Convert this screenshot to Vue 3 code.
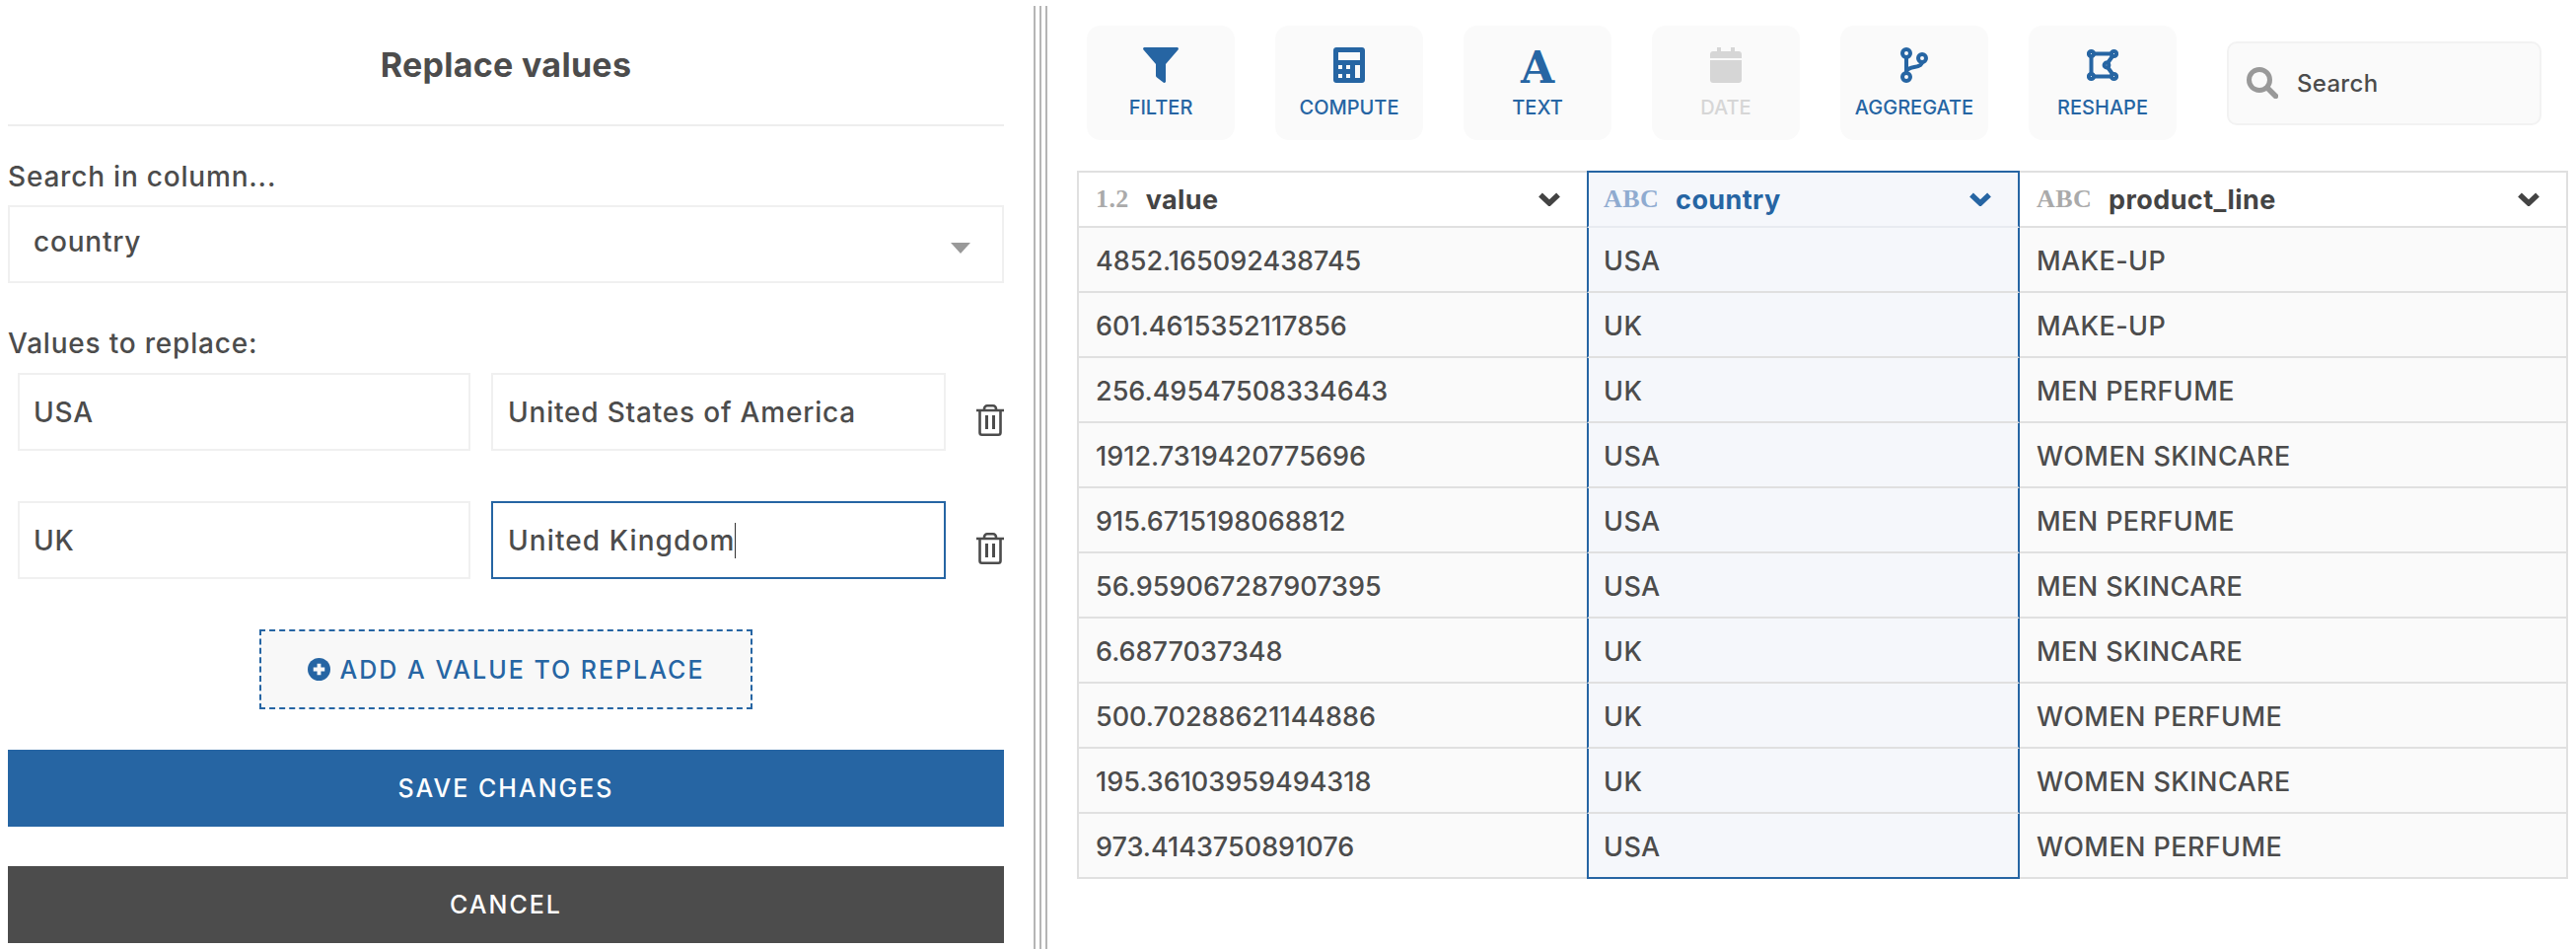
<script setup>
const rows = [
  ['4852.165092438745', 'USA', 'MAKE-UP'],
  ['601.4615352117856', 'UK', 'MAKE-UP'],
  ['256.49547508334643', 'UK', 'MEN PERFUME'],
  ['1912.7319420775696', 'USA', 'WOMEN SKINCARE'],
  ['915.6715198068812', 'USA', 'MEN PERFUME'],
  ['56.959067287907395', 'USA', 'MEN SKINCARE'],
  ['6.6877037348', 'UK', 'MEN SKINCARE'],
  ['500.70288621144886', 'UK', 'WOMEN PERFUME'],
  ['195.36103959494318', 'UK', 'WOMEN SKINCARE'],
  ['973.4143750891076', 'USA', 'WOMEN PERFUME'],
]

const columns = [
  { type: '1.2', name: 'value' },
  { type: 'ABC', name: 'country', active: true },
  { type: 'ABC', name: 'product_line' },
]
</script>

<template>
  <div class="page">
    <section class="panel">
      <h1 class="title">Replace values</h1>

      <label class="label label-search">Search in column...</label>
      <div class="select">
        <span>country</span>
        <i class="arrow"></i>
      </div>

      <label class="label label-values">Values to replace:</label>
      <div class="pair">
        <div class="field">USA</div>
        <div class="field">United States of America</div>
        <svg class="trash" viewBox="0 0 28 32" fill="none" stroke="#4c4c4c" stroke-width="2.6">
          <path d="M0 6h28M8 6V4.5C8 2.5 9.5 1.3 11 1.3h6c1.5 0 3 1.2 3 3.2V6" />
          <path d="M3.5 6v22.5c0 1.3 .9 2.2 2.2 2.2h16.6c1.3 0 2.2-.9 2.2-2.2V6" />
          <path d="M10.5 11v14M17.5 11v14" stroke-width="3" />
        </svg>
      </div>
      <div class="pair second">
        <div class="field">UK</div>
        <div class="field focused">United Kingdom<i class="caret"></i></div>
        <svg class="trash" viewBox="0 0 28 32" fill="none" stroke="#4c4c4c" stroke-width="2.6">
          <path d="M0 6h28M8 6V4.5C8 2.5 9.5 1.3 11 1.3h6c1.5 0 3 1.2 3 3.2V6" />
          <path d="M3.5 6v22.5c0 1.3 .9 2.2 2.2 2.2h16.6c1.3 0 2.2-.9 2.2-2.2V6" />
          <path d="M10.5 11v14M17.5 11v14" stroke-width="3" />
        </svg>
      </div>

      <button class="add">
        <svg viewBox="0 0 24 24" width="23" height="23">
          <circle cx="12" cy="12" r="12" fill="#2665a3" />
          <path d="M12 6v12M6 12h12" stroke="#f8f8f8" stroke-width="4" />
        </svg>
        ADD A VALUE TO REPLACE
      </button>

      <button class="action save">SAVE CHANGES</button>
      <button class="action cancel">CANCEL</button>
    </section>

    <div class="divider"></div>

    <section class="content">
      <div class="toolbar">
        <div class="tool">
          <svg viewBox="0 0 36 36" width="36" height="36">
            <path fill="#2665a3" d="M1.5 0h33c1.3 0 1.9 1.5 1 2.5L23 17v17.5c0 1.3-1.5 2-2.5 1.1l-6.5-5c-.6-.4-1-1-1-1.8V17L.5 2.5C-.4 1.5 .2 0 1.5 0z" />
          </svg>
          <span>FILTER</span>
        </div>
        <div class="tool">
          <svg viewBox="0 0 32 36" width="32" height="36">
            <path fill="#2665a3" fill-rule="evenodd" d="M3 0h26c1.7 0 3 1.3 3 3v30c0 1.7-1.3 3-3 3H3c-1.7 0-3-1.3-3-3V3c0-1.7 1.3-3 3-3zM5 5v8h22V5zM5 18v4h4v-4zM13 18v4h4v-4zM22 18v13h5V18zM5 27v4h4v-4zM13 27v4h4v-4z" />
          </svg>
          <span>COMPUTE</span>
        </div>
        <div class="tool">
          <b class="glyph">A</b>
          <span>TEXT</span>
        </div>
        <div class="tool disabled">
          <svg viewBox="0 0 32 36" width="32" height="36">
            <path fill="#d6d6d6" d="M7 0h4v4h10V0h4v4h4c1.7 0 3 1.3 3 3v4H0V7c0-1.7 1.3-3 3-3h4zM0 13h32v20c0 1.7-1.3 3-3 3H3c-1.7 0-3-1.3-3-3z" />
          </svg>
          <span>DATE</span>
        </div>
        <div class="tool">
          <svg viewBox="0 0 28 36" width="28" height="36" fill="none" stroke="#2665a3" stroke-width="4">
            <circle cx="6" cy="6" r="4" />
            <circle cx="6" cy="30" r="4" />
            <circle cx="22" cy="11" r="4" />
            <path d="M6 10v16M6 24c2-3 5-3.5 8-4 5-.8 8-2.5 8-5" />
          </svg>
          <span>AGGREGATE</span>
        </div>
        <div class="tool">
          <svg viewBox="0 0 32 32" width="32" height="32" fill="none" stroke="#2665a3" stroke-width="4">
            <circle cx="4.5" cy="4.5" r="2.6" />
            <circle cx="27.5" cy="4.5" r="2.6" />
            <circle cx="4.5" cy="27.5" r="2.6" />
            <circle cx="27.5" cy="27.5" r="2.6" />
            <circle cx="20" cy="16" r="2.4" />
            <path d="M7 4.5h18M4.5 7v18M7 27.5h18M26 7l-5 7M21 18l5 7" />
          </svg>
          <span>RESHAPE</span>
        </div>
        <div class="search">
          <svg viewBox="0 0 32 32" width="32" height="32" fill="none" stroke="#999">
            <circle cx="13" cy="13" r="10.5" stroke-width="5" />
            <path d="M21 21l8.5 8.5" stroke-width="5.5" stroke-linecap="round" />
          </svg>
          <span>Search</span>
        </div>
      </div>

      <div class="table">
        <div class="head-row">
          <div v-for="col in columns" :key="col.name" class="cell head" :class="{ active: col.active }">
            <span class="type">{{ col.type }}</span>
            <span class="name">{{ col.name }}</span>
            <svg class="chevron" viewBox="0 0 22 14" width="22" height="14" fill="none" stroke="currentColor" stroke-width="5.5">
              <path d="M2 2.5l9 8.5 9-8.5" />
            </svg>
          </div>
        </div>
        <div v-for="(row, i) in rows" :key="i" class="row">
          <div class="cell number">{{ row[0] }}</div>
          <div class="cell active">{{ row[1] }}</div>
          <div class="cell">{{ row[2] }}</div>
        </div>
      </div>
    </section>
  </div>
</template>

<style scoped>
.page {
  display: flex;
  width: 2612px;
  height: 962px;
  overflow: hidden;
  background: #fff;
  color: #4c4c4c;
  font-family: Inter, "Open Sans", sans-serif;
  font-size: 28px;
  font-weight: 500;
  letter-spacing: 0.8px;
}

.panel {
  width: 1010px;
  margin-left: 8px;
  flex: none;
  display: flex;
  flex-direction: column;
}

.title {
  margin: 0;
  height: 128px;
  padding-top: 46px;
  box-sizing: border-box;
  border-bottom: 2px solid #eee;
  text-align: center;
  font-size: 34px;
  line-height: 40px;
  font-weight: 700;
  letter-spacing: 0.3px;
}

.label {
  display: block;
  line-height: 32px;
}

.label-search {
  margin-top: 35px;
}

.select {
  margin-top: 13px;
  height: 79px;
  box-sizing: border-box;
  border: 2px solid #f0f0f0;
  padding: 0 32px 0 24px;
  display: flex;
  align-items: center;
  justify-content: space-between;
}

.select span {
  margin-bottom: 6px;
}

.arrow {
  margin-top: 8px;
  border-left: 10px solid transparent;
  border-right: 10px solid transparent;
  border-top: 11px solid #999;
}

.label-values {
  margin-top: 45px;
}

.pair {
  margin-top: 14px;
  display: flex;
  align-items: center;
  padding-left: 10px;
}

.pair.second {
  margin-top: 51px;
}

.field {
  width: 459px;
  height: 79px;
  box-sizing: border-box;
  border: 2px solid #f0f0f0;
  padding: 0 14px;
  display: flex;
  align-items: center;
}

.field + .field {
  width: 461px;
  margin-left: 21px;
  padding: 0 15px;
}

.focused {
  border-color: #2665a3;
  letter-spacing: 1.1px;
}

.caret {
  width: 1px;
  height: 36px;
  background: #333;
}

.trash {
  width: 28px;
  height: 32px;
  margin: 16px 0 0 31px;
}

.add {
  align-self: center;
  margin-top: 51px;
  width: 500px;
  height: 81px;
  border: 2px dashed #2665a3;
  background: #f8f8f8;
  color: #2665a3;
  font: 500 25px Inter, sans-serif;
  letter-spacing: 2px;
  display: flex;
  align-items: center;
  justify-content: center;
  gap: 10px;
}

.action {
  height: 78px;
  border: none;
  color: #fff;
  font: 500 25px Inter, sans-serif;
  letter-spacing: 2px;
}

.save {
  margin-top: 41px;
  background: #2665a3;
}

.cancel {
  margin-top: 40px;
  background: #4c4c4c;
}

.divider {
  flex: none;
  width: 14px;
  height: 956px;
  margin: 6px 0 0 30px;
  box-sizing: border-box;
  border-left: 2px solid #b5b5b5;
  border-right: 2px solid #b5b5b5;
  display: flex;
  justify-content: center;
}

.divider::after {
  content: "";
  width: 2px;
  background: #b5b5b5;
}

.content {
  flex: 1;
  padding: 26px 8px 0 30px;
  min-width: 0;
}

.toolbar {
  display: flex;
  align-items: center;
  margin-left: 10px;
  gap: 41px;
}

.tool {
  width: 150px;
  height: 116px;
  box-sizing: border-box;
  padding-top: 22px;
  border-radius: 14px;
  background: #fafafa;
  color: #2665a3;
  display: flex;
  flex-direction: column;
  align-items: center;
  font-size: 20px;
  font-weight: 500;
  letter-spacing: 0;
}

.tool svg,
.glyph {
  height: 36px;
  flex: none;
}

.tool span {
  margin-top: 13px;
  line-height: 24px;
}

.tool.disabled {
  color: #d6d6d6;
}

.glyph {
  font: 700 44px/42px "DejaVu Serif", serif;
}

.search {
  width: 319px;
  height: 85px;
  box-sizing: border-box;
  margin-left: 10px;
  border: 2px solid #f2f2f2;
  border-radius: 10px;
  background: #fafafa;
  padding-left: 18px;
  display: flex;
  align-items: center;
  gap: 19px;
  font-size: 24px;
  letter-spacing: 0.3px;
}

.table {
  margin-top: 31px;
  border-left: 2px solid #e0e0e0;
  border-right: 2px solid #e0e0e0;
}

.head-row,
.row {
  display: grid;
  grid-template-columns: 515px 439px 1fr;
}

.cell {
  height: 66px;
  box-sizing: border-box;
  border-bottom: 2px solid #e0e0e0;
  background: #fafafa;
  padding: 2px 17px 0;
  display: flex;
  align-items: center;
  font-size: 27px;
  letter-spacing: 0.4px;
}

.number {
  letter-spacing: 0;
}

.cell.active {
  background: #f5f7fb;
  border-left: 2px solid #2665a3;
  border-right: 2px solid #2665a3;
  padding-left: 15px;
}

.row:last-child .cell.active {
  border-bottom-color: #2665a3;
}

.head {
  height: 58px;
  padding-top: 0;
  background: #fff;
  border-top: 2px solid #e0e0e0;
  color: #444;
  font-weight: 700;
}

.head.active {
  color: #2665a3;
  border-top-color: #2665a3;
  border-bottom-color: #e8ebf0;
}

.type {
  font: 700 26px "Liberation Serif", serif;
  color: #aaa;
  margin-right: 17px;
}

.head.active .type {
  color: #8fabd0;
}

.chevron {
  margin-left: auto;
  margin-right: 10px;
}
</style>
